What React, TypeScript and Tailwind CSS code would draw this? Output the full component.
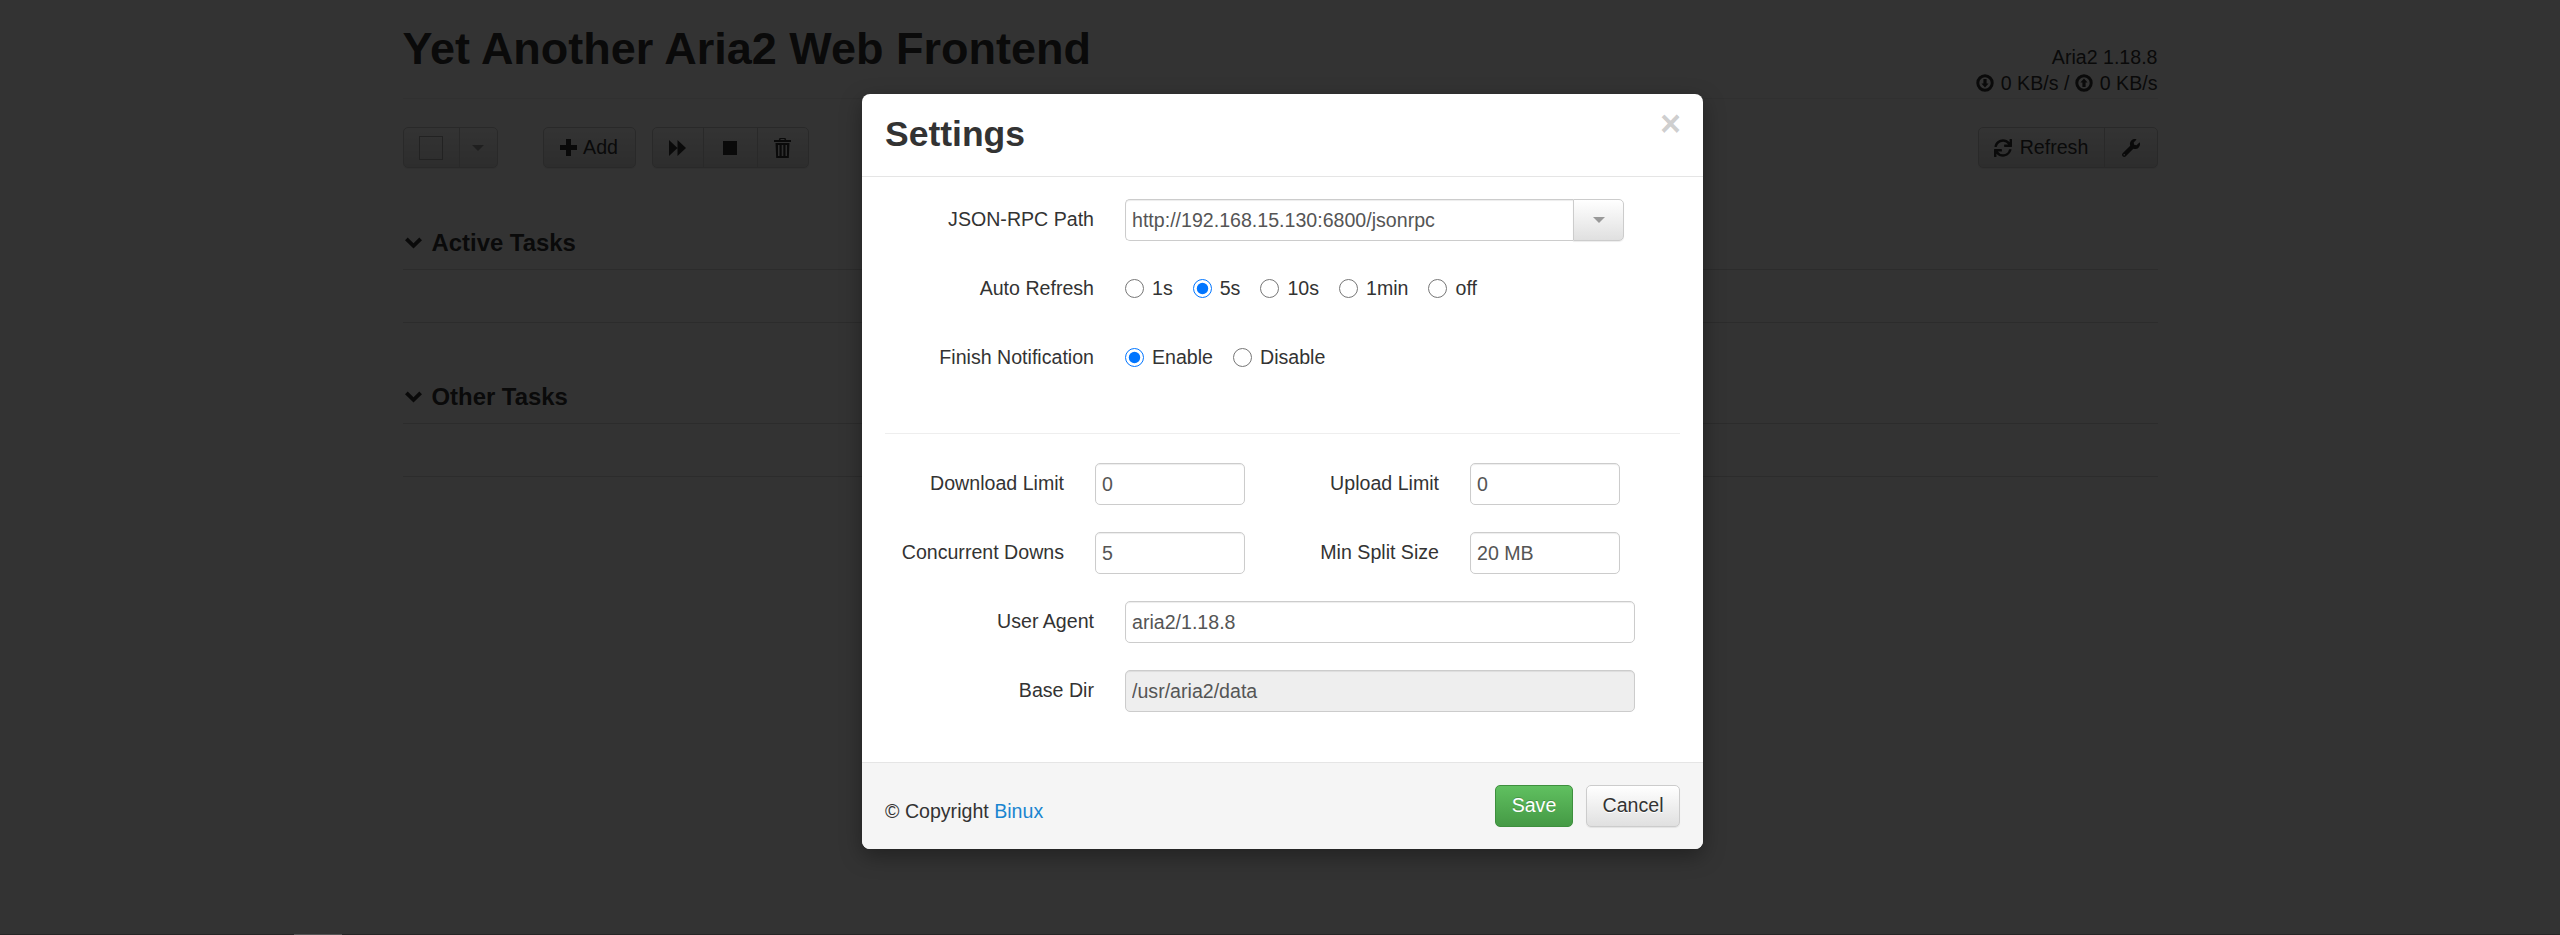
import { FaSync, FaWrench } from "react-icons/fa";

const sans = "font-['Liberation_Sans',Arial,sans-serif]";
const defaultBtn =
  "border border-[#ccc] bg-gradient-to-b from-white to-[#e0e0e0] shadow-[inset_0_1px_0_rgba(255,255,255,.15),0_1px_1px_rgba(0,0,0,.075)]";
const inputBase =
  "h-[42px] rounded-[5px] border border-[#ccc] px-[6px] text-[19.6px] text-[#555] shadow-[inset_0_1px_1px_rgba(0,0,0,.075)] outline-none";

function Chevron() {
  return (
    <svg width="17" height="12" viewBox="0 0 17 12" className="mr-[10px] shrink-0" fill="#333">
      <path d="M0 3.2 2.7.5 8.5 6.2 14.3.5 17 3.2 8.5 11.6z" />
    </svg>
  );
}

function CircleArrow({ up }: { up?: boolean }) {
  return (
    <svg width="18" height="18" viewBox="0 0 18 18" className="mr-[1.5px] inline-block align-[-2px]">
      <circle cx="9" cy="9" r="7.2" fill="none" stroke="#333" strokeWidth="3" />
      <path
        d={up ? "M9 4.4 12.6 8.6H10.6V13H7.4V8.6H5.4z" : "M9 13.6 12.6 9.4H10.6V5H7.4V9.4H5.4z"}
        fill="#333"
      />
    </svg>
  );
}

function TaskSection({ title }: { title: string }) {
  return (
    <div>
      <div className="flex h-[47px] items-center border-b border-[#ddd] pb-[7px] pl-[2px] text-[23.9px] font-bold text-[#333]">
        <Chevron />
        {title}
      </div>
      <div className="h-[53px] border-b border-[#ddd]" />
    </div>
  );
}

function Page() {
  return (
    <div className="mx-auto w-[1755px] pt-[21px] text-[#333]">
      <div className="flex h-[78px] items-start justify-between border-b border-[#eee]">
        <h1 className="mt-[2px] text-[45px] leading-[52px] font-bold">Yet Another Aria2 Web Frontend</h1>
        <div className="pt-[23px] text-right text-[19.6px] leading-[26px]">
          <div>Aria2 1.18.8</div>
          <div>
            <CircleArrow /> 0 KB/s / <CircleArrow up /> 0 KB/s
          </div>
        </div>
      </div>

      <div className="mt-[28px] flex h-[41px] items-stretch">
        <div className={`${defaultBtn} flex w-[95px] rounded-[5px]`}>
          <div className="flex w-[56px] items-center justify-center border-r border-[#ccc]">
            <div className="size-[24px] border border-[#aaa]" />
          </div>
          <div className="flex flex-1 items-center justify-center">
            <div className="size-0 border-x-[6px] border-t-[6px] border-x-transparent border-t-[#999]" />
          </div>
        </div>
        <div className={`${defaultBtn} ml-[45px] flex w-[93px] items-center justify-center gap-[6px] rounded-[5px] text-[19.6px]`}>
          <svg width="17" height="17" viewBox="0 0 17 17" fill="#333">
            <path d="M6 0h5v6h6v5h-6v6H6v-6H0V6h6z" />
          </svg>
          Add
        </div>
        <div className={`${defaultBtn} ml-[16px] flex w-[157px] rounded-[5px]`}>
          <div className="flex w-[51px] items-center justify-center border-r border-[#ccc]">
            <svg width="17" height="16" viewBox="0 0 17 16" fill="#333">
              <path d="M0 0 8.5 8 0 16zM8.5 0 17 8 8.5 16z" />
            </svg>
          </div>
          <div className="flex w-[54px] items-center justify-center border-r border-[#ccc]">
            <div className="size-[14px] bg-[#333]" />
          </div>
          <div className="flex flex-1 items-center justify-center">
            <svg width="17" height="20" viewBox="0 0 17 20" fill="#333">
              <path d="M5.5 0h6l.7 2H17v2H0V2h4.8zM6.7 1l-.3 1h4.2l-.3-1z" />
              <path d="M1.5 5h14l-.7 15H2.200zM4 7v11h1.500V7zM7.700 7v11h1.600V7zM11.500 7v11H13V7z" fillRule="evenodd" />
            </svg>
          </div>
        </div>
        <div className={`${defaultBtn} ml-auto flex w-[180px] rounded-[5px] text-[19.6px]`}>
          <div className="flex w-[126px] items-center justify-center gap-[8px] border-r border-[#ccc]">
            <FaSync className="size-[18px]" />
            Refresh
          </div>
          <div className="flex flex-1 items-center justify-center">
            <FaWrench className="size-[18px]" />
          </div>
        </div>
      </div>

      <div className="mt-[55px] flex flex-col gap-[54px]">
        <TaskSection title="Active Tasks" />
        <TaskSection title="Other Tasks" />
      </div>
    </div>
  );
}

function Radio({ label, checked }: { label: string; checked?: boolean }) {
  return (
    <label className="mr-[20px] flex items-center gap-[8px]">
      <input type="radio" defaultChecked={checked} name={label} className="m-0 size-[19px]" />
      {label}
    </label>
  );
}

function Field({ value, disabled, className }: { value: string; disabled?: boolean; className: string }) {
  return (
    <input
      defaultValue={value}
      disabled={disabled}
      className={`${inputBase} ${className} ${disabled ? "bg-[#eee]" : "bg-white"}`}
    />
  );
}

function Settings() {
  return (
    <div className="absolute inset-0 z-10 bg-black/80">
      <div className="relative ml-[862px] mt-[94px] w-[841px] overflow-hidden rounded-[8px] bg-white text-[19.6px] text-[#333] shadow-[0_7px_21px_rgba(0,0,0,.35)]">
        <div className="relative h-[83px] border-b border-[#e5e5e5] pl-[23px] pt-[21px]">
          <h3 className="text-[35.5px] leading-[38px] font-bold">Settings</h3>
          <span className="absolute right-[22px] top-[8px] text-[36px] leading-[44px] font-bold text-black/20">×</span>
        </div>

        <div className="flex h-[585px] flex-col px-[23px] pt-[22px]">
          <div className="flex h-[42px] items-center">
            <div className="mr-[31px] w-[209px] text-right">JSON-RPC Path</div>
            <Field value="http://192.168.15.130:6800/jsonrpc" className="w-[448px] rounded-r-none border-r-0" />
            <div className={`${defaultBtn} flex h-[42px] w-[51px] items-center justify-center rounded-r-[5px]`}>
              <div className="size-0 border-x-[6px] border-t-[6px] border-x-transparent border-t-[#999]" />
            </div>
          </div>
          <div className="mt-[27px] flex h-[42px] items-center">
            <div className="mr-[31px] w-[209px] text-right">Auto Refresh</div>
            <Radio label="1s" />
            <Radio label="5s" checked />
            <Radio label="10s" />
            <Radio label="1min" />
            <Radio label="off" />
          </div>
          <div className="mt-[27px] flex h-[42px] items-center">
            <div className="mr-[31px] w-[209px] text-right">Finish Notification</div>
            <Radio label="Enable" checked />
            <Radio label="Disable" />
          </div>
          <hr className="mt-[54px] border-t border-[#eee]" />
          <div className="mt-[29px] flex h-[42px] items-center">
            <div className="mr-[31px] w-[179px] text-right">Download Limit</div>
            <Field value="0" className="w-[150px]" />
            <div className="mr-[31px] w-[194px] text-right">Upload Limit</div>
            <Field value="0" className="w-[150px]" />
          </div>
          <div className="mt-[27px] flex h-[42px] items-center">
            <div className="mr-[31px] w-[179px] whitespace-nowrap text-right">Concurrent Downs</div>
            <Field value="5" className="w-[150px]" />
            <div className="mr-[31px] w-[194px] text-right">Min Split Size</div>
            <Field value="20 MB" className="w-[150px]" />
          </div>
          <div className="mt-[27px] flex h-[42px] items-center">
            <div className="mr-[31px] w-[209px] text-right">User Agent</div>
            <Field value="aria2/1.18.8" className="w-[510px]" />
          </div>
          <div className="mt-[27px] flex h-[42px] items-center">
            <div className="mr-[31px] w-[209px] text-right">Base Dir</div>
            <Field value="/usr/aria2/data" disabled className="w-[510px]" />
          </div>
        </div>

        <div className="flex h-[87px] items-center justify-between border-t border-[#e5e5e5] bg-[#f5f5f5] px-[23px]">
          <div className="pt-[12px]">
            © Copyright <a className="text-[#1a85d0]">Binux</a>
          </div>
          <div className="flex gap-[13px]">
            <button className="h-[42px] w-[78px] rounded-[5px] border border-[#3e8f3e] bg-gradient-to-b from-[#60c060] to-[#459a45] text-white [text-shadow:0_-1px_0_rgba(0,0,0,.2)]">
              Save
            </button>
            <button className={`${defaultBtn} h-[42px] w-[94px] rounded-[5px] [text-shadow:0_1px_0_#fff]`}>Cancel</button>
          </div>
        </div>
      </div>
      <div className="absolute inset-x-0 bottom-0 h-px bg-[#262626]">
        <div className="ml-[294px] h-px w-[48px] bg-[#555]" />
      </div>
    </div>
  );
}

export default function App() {
  return (
    <div className={`${sans} relative h-[935px] overflow-hidden bg-white`}>
      <Page />
      <Settings />
    </div>
  );
}
